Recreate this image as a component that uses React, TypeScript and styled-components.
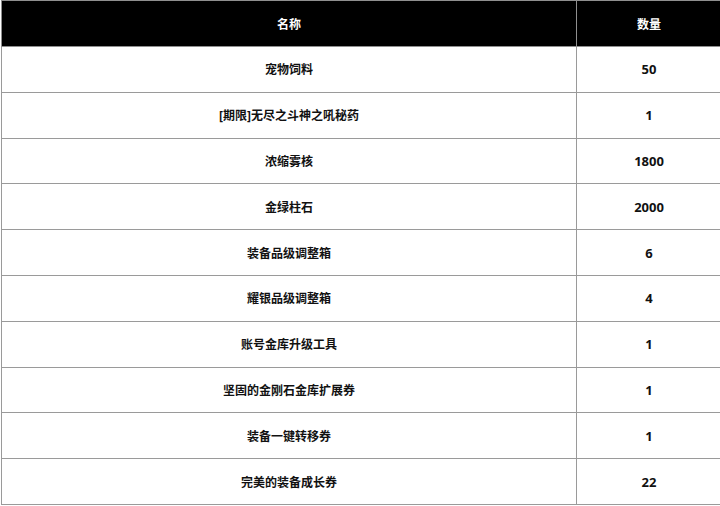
import React from "react";
import styled, { createGlobalStyle } from "styled-components";

const GlobalStyle = createGlobalStyle`
  body {
    margin: 0;
    background: #fff;
    font-family: "Noto Sans", "Noto Sans CJK SC", sans-serif;
  }
`;

const Wrap = styled.div`
  width: 720px;
  height: 506px;
  overflow: hidden;
  padding-left: 1px;
  box-sizing: border-box;
`;

const Table = styled.table`
  width: 718px;
  border-collapse: collapse;
  table-layout: fixed;
`;

const HeadCell = styled.th<{ $w: number }>`
  width: ${({ $w }) => $w}px;
  height: 45px;
  padding: 0;
  background: #000;
  color: #fff;
  font-size: 12px;
  font-weight: 700;
  text-align: center;
  border: 1px solid #8f8f8f;
`;

const Cell = styled.td`
  height: 44.8px;
  padding: 0;
  color: #111;
  font-size: 12px;
  font-weight: 700;
  text-align: center;
  border: 1px solid #9a9a9a;
`;

const Num = styled(Cell)`
  font-size: 13px;
`;

const items: [string, string][] = [
  ["宠物饲料", "50"],
  ["[期限]无尽之斗神之吼秘药", "1"],
  ["浓缩雾核", "1800"],
  ["金绿柱石", "2000"],
  ["装备品级调整箱", "6"],
  ["耀银品级调整箱", "4"],
  ["账号金库升级工具", "1"],
  ["坚固的金刚石金库扩展券", "1"],
  ["装备一键转移券", "1"],
  ["完美的装备成长券", "22"],
];

const App: React.FC = () => {
  return (
    <>
      <GlobalStyle />
      <Wrap>
        <Table>
          <thead>
            <tr>
              <HeadCell $w={574}>名称</HeadCell>
              <HeadCell $w={144}>数量</HeadCell>
            </tr>
          </thead>
          <tbody>
            {items.map(([name, count]) => (
              <tr key={name}>
                <Cell>{name}</Cell>
                <Num>{count}</Num>
              </tr>
            ))}
          </tbody>
        </Table>
      </Wrap>
    </>
  );
};

export default App;
